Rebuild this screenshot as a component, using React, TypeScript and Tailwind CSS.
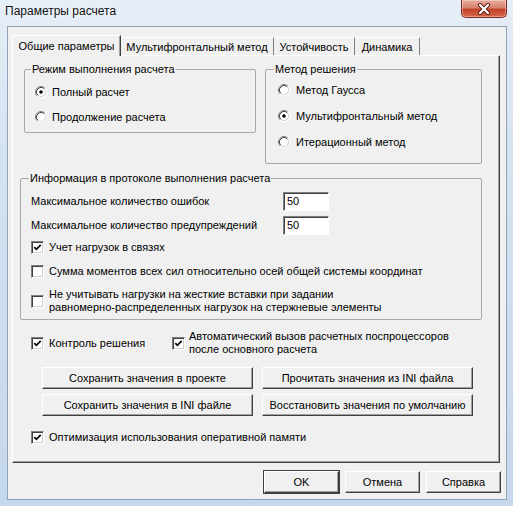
import React from "react";

function Radio({ checked }: { checked?: boolean }) {
  return (
    <svg width="12" height="12" viewBox="0 0 12 12" className="shrink-0">
      <circle cx="6" cy="6" r="5" fill="#ffffff" />
      <path d="M2.11 9.89 A5.5 5.5 0 0 1 9.89 2.11" stroke="#808080" fill="none" strokeWidth="1" />
      <path d="M9.89 2.11 A5.5 5.5 0 0 1 2.11 9.89" stroke="#ffffff" fill="none" strokeWidth="1" />
      <path d="M2.82 9.18 A4.5 4.5 0 0 1 9.18 2.82" stroke="#404040" fill="none" strokeWidth="1" />
      <path d="M9.18 2.82 A4.5 4.5 0 0 1 2.82 9.18" stroke="#d4d0c8" fill="none" strokeWidth="1" />
      {checked && <circle cx="6" cy="6" r="1.8" fill="#000000" />}
    </svg>
  );
}

function Check({ checked }: { checked?: boolean }) {
  return (
    <span className="w-[13px] h-[13px] shrink-0 bg-white border border-t-[#808080] border-l-[#808080] border-r-white border-b-white shadow-[inset_1px_1px_0_#404040,inset_-1px_-1px_0_#d4d0c8] flex items-center justify-center">
      {checked && (
        <svg width="9" height="9" viewBox="0 0 9 9">
          <path d="M1.3 4.2 L3.4 6.3 L7.7 1.9" stroke="#000000" strokeWidth="1.7" fill="none" />
        </svg>
      )}
    </span>
  );
}

function Btn({ children, className }: { children: React.ReactNode; className: string }) {
  return (
    <div
      className={
        "flex items-center justify-center bg-[#f0f0f0] border border-t-white border-l-white border-r-[#404040] border-b-[#404040] shadow-[inset_-1px_-1px_0_#a0a0a0] text-[11px] text-black " +
        className
      }
    >
      {children}
    </div>
  );
}

function Input({ value }: { value: string }) {
  return (
    <div className="w-[46px] h-[19px] bg-white border border-t-[#808080] border-l-[#808080] border-r-white border-b-white shadow-[inset_1px_1px_0_#404040] pl-[3px] flex items-center text-[11px]">
      {value}
    </div>
  );
}

export default function App() {
  return (
    <div className="relative w-[513px] h-[506px] flex flex-col bg-[linear-gradient(180deg,#e6eef7_0%,#d5e2f0_30%,#c6d8ec_100%)] font-['Liberation_Sans',Arial,sans-serif] text-black overflow-hidden">
      {/* title bar */}
      <div className="h-[26px] shrink-0 pl-[5px] pt-[4px] text-[12px] leading-[14px] text-[#111] [text-shadow:0_0_6px_#ffffff]">
        Параметры расчета
      </div>
      <div className="absolute right-[6px] top-0 w-[46px] h-[18px] rounded-b-[5px] border border-t-0 border-[#7d2b1e] bg-[linear-gradient(180deg,#e9ab9b_0%,#d88470_45%,#c2422a_55%,#d8674a_100%)] flex items-center justify-center shadow-[inset_0_0_0_1px_rgba(255,255,255,0.35)]">
        <svg width="14" height="12" viewBox="0 0 14 12">
          <path d="M3 2 L11 10 M11 2 L3 10" stroke="#5a1a10" strokeWidth="4" strokeLinecap="round" fill="none" />
          <path d="M3 2 L11 10 M11 2 L3 10" stroke="#ffffff" strokeWidth="2.2" strokeLinecap="round" fill="none" />
        </svg>
      </div>

      {/* client area */}
      <div className="ml-[7px] w-[500px] h-[474px] bg-[#f0f0f0] border border-[#8fa3bb] flex flex-col text-[11px] leading-[14px]">
        {/* tabs */}
        <div className="pl-[4px] pt-[8px] flex items-end h-[28px]">
          <div className="relative z-10 -mb-[1px] w-[109px] h-[21px] bg-[#f0f0f0] border-t border-l border-r border-t-white border-l-white border-r-[#404040] shadow-[inset_-1px_0_0_#a0a0a0] flex items-center justify-center">
            Общие параметры
          </div>
          <div className="w-[153px] h-[18px] border-t border-r border-t-white border-r-[#808080] flex items-center justify-center">
            Мультифронтальный метод
          </div>
          <div className="w-[81px] h-[18px] border-t border-r border-t-white border-r-[#808080] flex items-center justify-center">
            Устойчивость
          </div>
          <div className="w-[65px] h-[18px] border-t border-r border-t-white border-r-[#808080] flex items-center justify-center">
            Динамика
          </div>
        </div>

        {/* panel */}
        <div className="ml-[4px] w-[488px] h-[408px] border border-t-white border-l-white border-r-[#404040] border-b-[#404040] shadow-[inset_-1px_-1px_0_#a0a0a0] flex flex-col pt-[6px]">
          {/* row of two groups */}
          <div className="flex items-start pl-[11px] gap-[9px]">
            <fieldset className="w-[232px] h-[71px] border border-[#a8a8a8] rounded-[2px] flex flex-col">
              <legend className="ml-[6px] px-[1px] leading-[14px]">Режим выполнения расчета</legend>
              <div className="flex flex-col pl-[10px] pt-[8px] gap-[9px]">
                <div className="h-[16px] flex items-center gap-[5px]">
                  <Radio checked />
                  <span>Полный расчет</span>
                </div>
                <div className="h-[16px] flex items-center gap-[5px]">
                  <Radio />
                  <span>Продолжение расчета</span>
                </div>
              </div>
            </fieldset>
            <fieldset className="w-[217px] h-[102px] border border-[#a8a8a8] rounded-[2px] flex flex-col">
              <legend className="ml-[8px] px-[1px] leading-[14px]">Метод решения</legend>
              <div className="flex flex-col pl-[12px] pt-[6px] gap-[10px]">
                <div className="h-[16px] flex items-center gap-[6px]">
                  <Radio />
                  <span>Метод Гаусса</span>
                </div>
                <div className="h-[16px] flex items-center gap-[6px]">
                  <Radio checked />
                  <span>Мультифронтальный метод</span>
                </div>
                <div className="h-[16px] flex items-center gap-[6px]">
                  <Radio />
                  <span>Итерационный метод</span>
                </div>
              </div>
            </fieldset>
          </div>

          {/* info group */}
          <fieldset className="ml-[7px] mt-[7px] w-[462px] h-[149px] border border-[#a8a8a8] rounded-[2px] flex flex-col">
            <legend className="ml-[8px] px-[1px] leading-[14px]">Информация в протоколе выполнения расчета</legend>
            <div className="flex flex-col pl-[10px]">
              <div className="mt-[6px] h-[20px] flex items-center">
                <span className="w-[252px]">Максимальное количество ошибок</span>
                <Input value="50" />
              </div>
              <div className="mt-[4px] h-[20px] flex items-center">
                <span className="w-[252px]">Максимальное количество предупреждений</span>
                <Input value="50" />
              </div>
              <div className="mt-[4px] h-[16px] flex items-center gap-[5px]">
                <Check checked />
                <span>Учет нагрузок в связях</span>
              </div>
              <div className="mt-[8px] h-[16px] flex items-center gap-[5px]">
                <Check />
                <span>Сумма моментов всех сил относительно осей общей системы координат</span>
              </div>
              <div className="mt-[9px] flex items-center gap-[5px]">
                <Check />
                <span className="leading-[13px]">
                  Не учитывать нагрузки на жесткие вставки при задании
                  <br />
                  равномерно-распределенных нагрузок на стержневые элементы
                </span>
              </div>
            </div>
          </fieldset>

          {/* checkboxes row */}
          <div className="mt-[10px] pl-[18px] flex items-center">
            <div className="w-[141px] flex items-center gap-[5px]">
              <Check checked />
              <span>Контроль решения</span>
            </div>
            <div className="flex items-center gap-[4px]">
              <Check checked />
              <span className="leading-[13px]">
                Автоматический вызов расчетных поспроцессоров
                <br />
                после основного расчета
              </span>
            </div>
          </div>

          {/* buttons */}
          <div className="mt-[11px] pl-[29px] flex gap-[9px]">
            <Btn className="w-[211px] h-[22px]">Сохранить значения в проекте</Btn>
            <Btn className="w-[211px] h-[22px]">Прочитать значения из INI файла</Btn>
          </div>
          <div className="mt-[5px] pl-[29px] flex gap-[9px]">
            <Btn className="w-[211px] h-[22px]">Сохранить значения в INI файле</Btn>
            <Btn className="w-[211px] h-[22px]">Восстановить значения по умолчанию</Btn>
          </div>

          <div className="mt-[13px] pl-[18px] h-[16px] flex items-center gap-[5px]">
            <Check checked />
            <span>Оптимизация использования оперативной памяти</span>
          </div>
        </div>

        {/* bottom buttons */}
        <div className="mt-[8px] pr-[5px] flex justify-end gap-[6px]">
          <div className="outline outline-1 outline-[#404040]">
            <Btn className="w-[75px] h-[22px]">OK</Btn>
          </div>
          <Btn className="w-[75px] h-[22px]">Отмена</Btn>
          <Btn className="w-[75px] h-[22px]">Справка</Btn>
        </div>
      </div>
    </div>
  );
}
